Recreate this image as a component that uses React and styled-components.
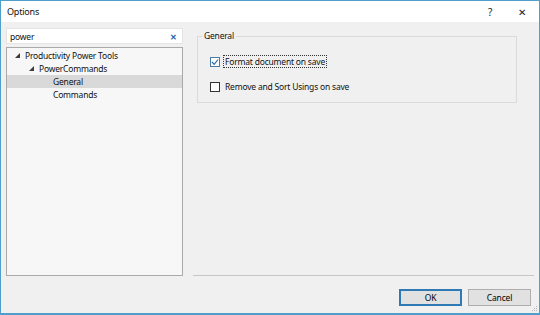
import styled, {createGlobalStyle} from 'styled-components';

const GlobalStyle = createGlobalStyle`
  html, body { margin: 0; padding: 0; background: #ffffff; }
  body {
    font-family: "Noto Sans", "Open Sans", sans-serif;
    font-size: 8.5px;
    letter-spacing: -0.2px;
    color: #111;
  }
  * { box-sizing: border-box; }
`;

const treeItems = [
  {label: 'Productivity Power Tools', level: 0, expanded: true},
  {label: 'PowerCommands', level: 1, expanded: true},
  {label: 'General', level: 2, selected: true},
  {label: 'Commands', level: 2},
];

function Expander() {
  return (
    <svg width='5' height='5' viewBox='0 0 5 5'>
      <polygon points='5,0 5,5 0,5' fill='#3c3c3c' />
    </svg>
  );
}

function Check() {
  return (
    <svg width='8' height='8' viewBox='0 0 8 8'>
      <polyline points='1,4 3.2,6.3 7,1.5' fill='none' stroke='#2a6aa8' strokeWidth='1.2' />
    </svg>
  );
}

function SizeGrip() {
  const dots = [[4, 0], [2, 2], [4, 2], [0, 4], [2, 4], [4, 4]];
  return (
    <svg width='6' height='6' viewBox='0 0 6 6'>
      {dots.map(([x, y]) => <rect key={`${x}-${y}`} x={x} y={y} width='1' height='1' fill='#b8b8b8' />)}
    </svg>
  );
}

export default function App() {
  return (
    <>
      <GlobalStyle />
      <Window>
        <TitleBar>
          <Title>Options</Title>
          <TitleButtons>
            <TitleBtn>?</TitleBtn>
            <TitleBtn>✕</TitleBtn>
          </TitleButtons>
        </TitleBar>
        <Body>
          <Main>
            <LeftColumn>
              <SearchBox>
                <SearchText>power</SearchText>
                <ClearBtn>✕</ClearBtn>
              </SearchBox>
              <Tree>
                {treeItems.map((item) => (
                  <TreeRow key={item.label} $selected={item.selected} $level={item.level}>
                    <ExpanderSlot>{item.expanded && <Expander />}</ExpanderSlot>
                    {item.label}
                  </TreeRow>
                ))}
              </Tree>
            </LeftColumn>
            <RightColumn>
              <GroupBox>
                <Legend>General</Legend>
                <CheckRow>
                  <CheckBox $checked><Check /></CheckBox>
                  <CheckLabel $focused>Format document on save</CheckLabel>
                </CheckRow>
                <CheckRow>
                  <CheckBox />
                  <CheckLabel>Remove and Sort Usings on save</CheckLabel>
                </CheckRow>
              </GroupBox>
            </RightColumn>
          </Main>
          <Footer>
            <Button $default>OK</Button>
            <Button>Cancel</Button>
            <Grip><SizeGrip /></Grip>
          </Footer>
        </Body>
      </Window>
    </>
  );
}

const Window = styled.div`
  width: 540px;
  height: 315px;
  border: 1px solid #4f9fca;
  border-bottom-width: 2px;
  display: flex;
  flex-direction: column;
  background: #f0f0f0;
`;

const TitleBar = styled.div`
  height: 21px;
  background: #ffffff;
  display: flex;
  align-items: center;
  padding-left: 6px;
`;

const Title = styled.div`
  flex: 1;
  font-size: 9px;
`;

const TitleButtons = styled.div`
  display: flex;
  height: 100%;
  padding-right: 1px;
`;

const TitleBtn = styled.div`
  width: 32px;
  display: flex;
  align-items: center;
  justify-content: center;
  font-size: 10px;
  color: #222;
`;

const Body = styled.div`
  flex: 1;
  display: flex;
  flex-direction: column;
  padding: 6px 5px 0 5px;
  position: relative;
`;

const Main = styled.div`
  display: flex;
  gap: 10px;
  height: 248px;
`;

const LeftColumn = styled.div`
  width: 177px;
  display: flex;
  flex-direction: column;
  gap: 3px;
`;

const SearchBox = styled.div`
  height: 16px;
  background: #ffffff;
  border: 1px solid #e4e4e4;
  display: flex;
  align-items: center;
  padding: 0 5px 0 3px;
`;

const SearchText = styled.span`
  flex: 1;
`;

const ClearBtn = styled.span`
  color: #1b5fae;
  font-size: 8px;
  font-weight: bold;
`;

const Tree = styled.div`
  flex: 1;
  background: #f7f7f7;
  border: 1px solid #a9a9a9;
  padding-top: 1px;
`;

const TreeRow = styled.div`
  height: 13px;
  display: flex;
  align-items: center;
  padding-left: ${(p) => 6 + p.$level * 14}px;
  background: ${(p) => (p.$selected ? '#d9d9d9' : 'transparent')};
`;

const ExpanderSlot = styled.span`
  width: 12px;
  display: flex;
  align-items: center;
  padding-left: 2px;
`;

const RightColumn = styled.div`
  flex: 1;
  border-bottom: 1px solid #c6c6c6;
  padding: 8px 17px 0 4px;
`;

const GroupBox = styled.div`
  position: relative;
  height: 67px;
  border: 1px solid #dadada;
  padding: 18px 0 0 12px;
  display: flex;
  flex-direction: column;
  gap: 12px;
`;

const Legend = styled.span`
  position: absolute;
  top: -7px;
  left: 4px;
  padding: 0 2px;
  background: #f0f0f0;
`;

const CheckRow = styled.div`
  display: flex;
  align-items: center;
  gap: 3px;
  height: 13px;
`;

const CheckBox = styled.span`
  width: 10px;
  height: 10px;
  background: #ffffff;
  border: 1px solid ${(p) => (p.$checked ? '#4a7aa6' : '#333333')};
  display: flex;
  align-items: center;
  justify-content: center;
`;

const CheckLabel = styled.span`
  padding: 0 1px;
  border: 1px dotted ${(p) => (p.$focused ? '#333' : 'transparent')};
  line-height: 11px;
`;

const Footer = styled.div`
  flex: 1;
  display: flex;
  justify-content: flex-end;
  align-items: flex-start;
  gap: 6px;
  padding: 13px 3px 0 0;
`;

const Button = styled.button`
  width: 63px;
  height: 17px;
  padding: 0;
  font-family: inherit;
  font-size: 8.5px;
  letter-spacing: -0.2px;
  color: #000;
  background: #e1e1e1;
  border: 1px solid ${(p) => (p.$default ? '#2f79b5' : '#adadad')};
  box-shadow: ${(p) => (p.$default ? 'inset 0 0 0 1px #2f79b5' : 'none')};
`;

const Grip = styled.span`
  position: absolute;
  right: 1px;
  bottom: 1px;
  display: flex;
`;
